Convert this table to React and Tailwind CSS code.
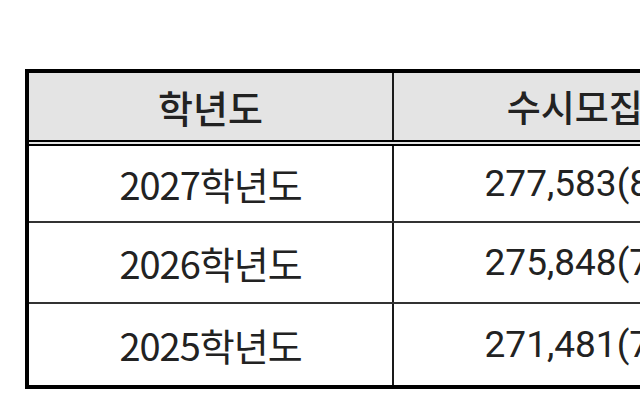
const ROWS = [
  { year: '2027학년도', early: '277,583(80.3%)', height: 'h-[77px]' },
  { year: '2026학년도', early: '275,848(79.9%)', height: 'h-[81px]' },
  { year: '2025학년도', early: '271,481(79.6%)', height: 'h-[81px]' },
];

const KR = "font-['Noto_Sans_CJK_KR','Noto_Sans',sans-serif]";
const NUM = "font-['Roboto','Noto_Sans_CJK_KR',sans-serif]";

export default function App() {
  return (
    <div className="w-[640px] h-[402px] overflow-hidden bg-white pt-[69px] pl-[25px]">
      <div className="w-[900px] border-4 border-r-0 border-black text-[#222]">
        <div className="flex h-[73px] border-b-[6px] border-double border-black bg-[#e4e4e4]">
          <div
            className={`w-[365px] shrink-0 border-r-2 border-[#1a1a1a] flex items-center justify-center text-[38px] font-medium leading-none ${KR}`}
          >
            학년도
          </div>
          <div
            className={`w-[438px] shrink-0 flex items-center justify-center text-[37px] font-medium leading-none ${KR}`}
          >
            수시모집 인원
          </div>
        </div>

        {ROWS.map((row, i) => (
          <div
            key={row.year}
            className={`flex ${row.height} ${i < ROWS.length - 1 ? 'border-b-2 border-[#333]' : ''}`}
          >
            <div
              className={`w-[365px] shrink-0 border-r-2 border-[#1a1a1a] flex items-center justify-center text-[38px] leading-none tracking-[-1px] ${KR}`}
            >
              {row.year}
            </div>
            <div
              className={`w-[438px] shrink-0 flex items-center justify-center text-[37px] leading-none ${NUM}`}
            >
              {row.early}
            </div>
          </div>
        ))}
      </div>
    </div>
  );
}
